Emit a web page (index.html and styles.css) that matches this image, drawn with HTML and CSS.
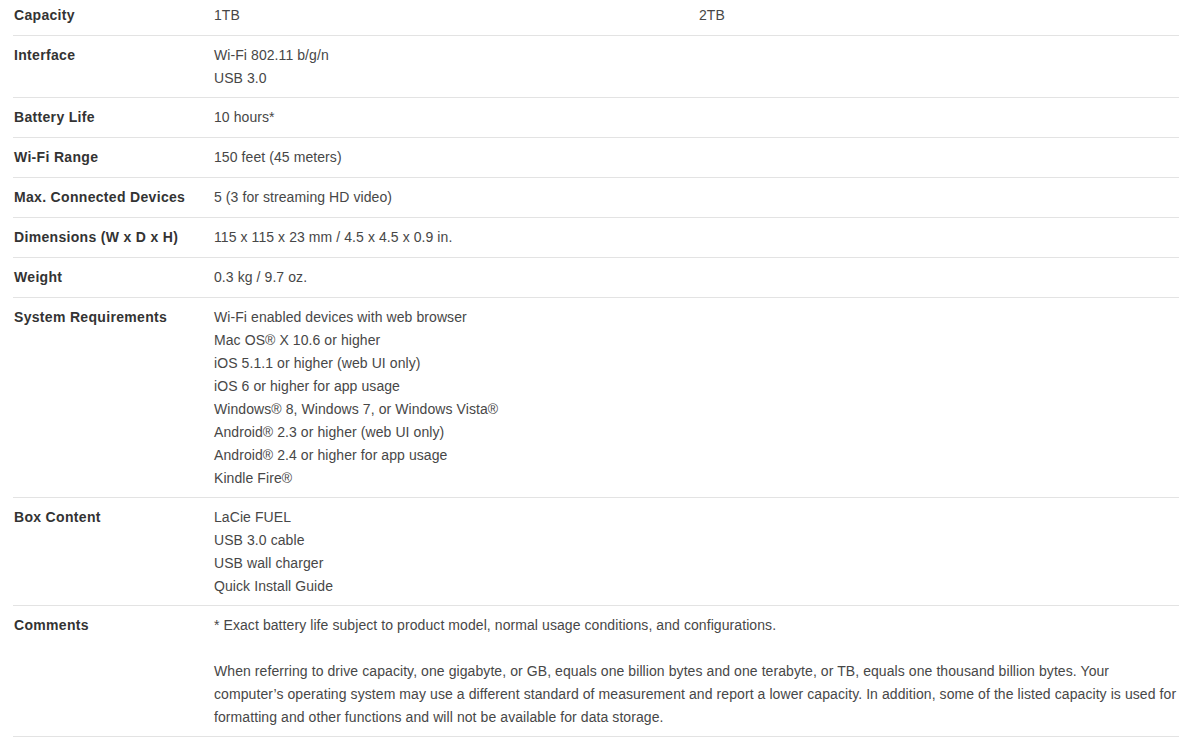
FILE: index.html
```html
<!DOCTYPE html>
<html>
<head>
<meta charset="utf-8">
<link rel="stylesheet" href="styles.css">
</head>
<body>
<div class="page">
<table class="specs">
<colgroup><col class="c-label"><col class="c-v1"><col class="c-v2"></colgroup>
<tbody>
<tr><th>Capacity</th><td>1TB</td><td>2TB</td></tr>
<tr><th>Interface</th><td colspan="2">Wi-Fi 802.11 b/g/n<br>USB 3.0</td></tr>
<tr><th>Battery Life</th><td colspan="2">10 hours*</td></tr>
<tr><th>Wi-Fi Range</th><td colspan="2">150 feet (45 meters)</td></tr>
<tr><th>Max. Connected Devices</th><td colspan="2">5 (3 for streaming HD video)</td></tr>
<tr><th>Dimensions (W x D x H)</th><td colspan="2">115 x 115 x 23 mm / 4.5 x 4.5 x 0.9 in.</td></tr>
<tr><th>Weight</th><td colspan="2">0.3 kg / 9.7 oz.</td></tr>
<tr><th>System Requirements</th><td colspan="2">Wi-Fi enabled devices with web browser<br>Mac OS® X 10.6 or higher<br>iOS 5.1.1 or higher (web UI only)<br>iOS 6 or higher for app usage<br>Windows® 8, Windows 7, or Windows Vista®<br>Android® 2.3 or higher (web UI only)<br>Android® 2.4 or higher for app usage<br>Kindle Fire®</td></tr>
<tr><th>Box Content</th><td colspan="2">LaCie FUEL<br>USB 3.0 cable<br>USB wall charger<br>Quick Install Guide</td></tr>
<tr><th>Comments</th><td colspan="2"><p class="note">* Exact battery life subject to product model, normal usage conditions, and configurations.</p><p class="note">When referring to drive capacity, one gigabyte, or GB, equals one billion bytes and one terabyte, or TB, equals one thousand billion bytes. Your<br>computer’s operating system may use a different standard of measurement and report a lower capacity. In addition, some of the listed capacity is used for<br>formatting and other functions and will not be available for data storage.</p></td></tr>
</tbody>
</table>
</div>
</body>
</html>
```
FILE: styles.css
```css
html, body {
  margin: 0;
  padding: 0;
  background: #ffffff;
  overflow: hidden;
}
body {
  font-family: "Liberation Sans", Arial, sans-serif;
  font-size: 14px;
  color: #474747;
}
.page {
  padding-left: 13px;
  margin-top: -4px;
}
.specs {
  width: 1166px;
  border-collapse: collapse;
  table-layout: fixed;
}
.c-label { width: 200px; }
.c-v1 { width: 485px; }
.specs th,
.specs td {
  text-align: left;
  vertical-align: top;
  padding: 8px 0 7px 1px;
  line-height: 23px;
  border-bottom: 1px solid #e3e3e3;
}
.specs td {
  letter-spacing: 0.08px;
}
.specs th {
  font-weight: bold;
  color: #333333;
  padding-bottom: 8px;
  letter-spacing: 0.32px;
}
.note {
  margin: 0 0 23px 0;
  white-space: nowrap;
}
.note:last-child {
  margin-bottom: 0;
}
```
